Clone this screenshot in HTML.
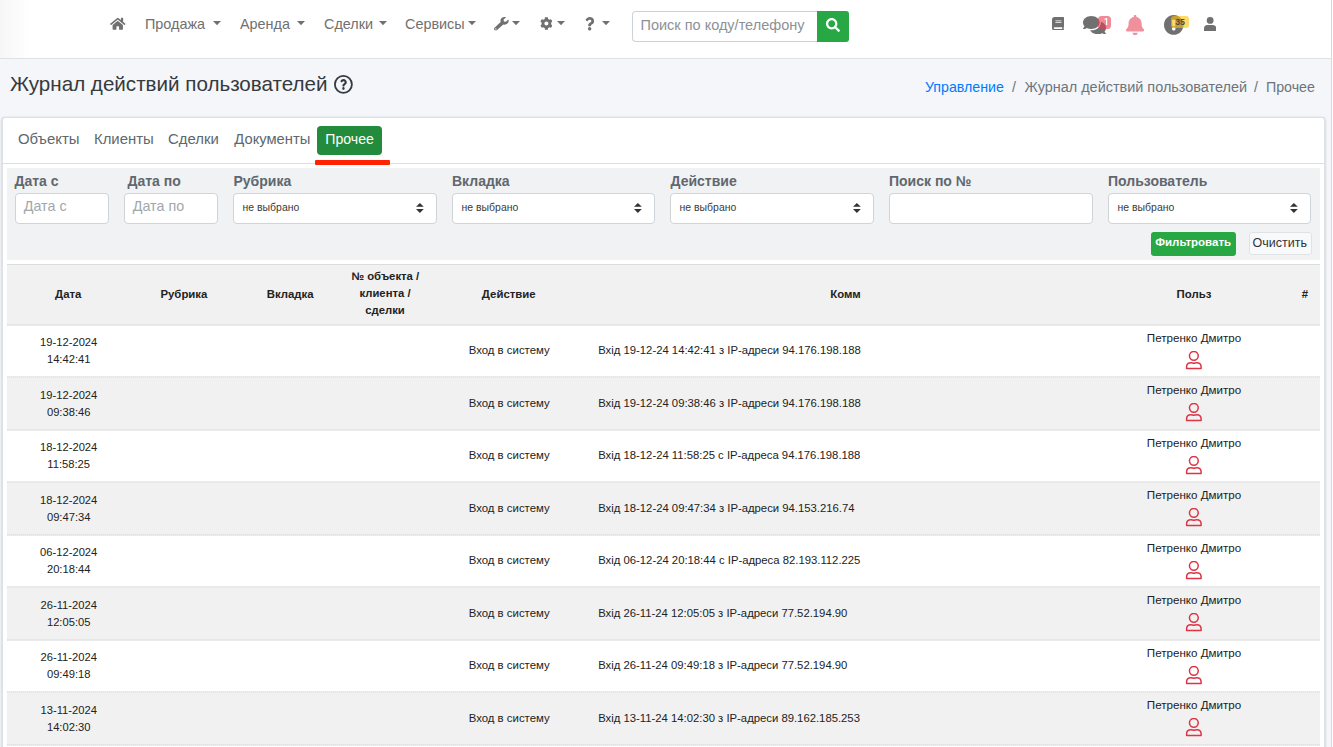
<!DOCTYPE html><html><head><meta charset="utf-8"><style>
*{box-sizing:border-box;margin:0;padding:0}
html,body{width:1333px;height:747px;overflow:hidden;background:#fff}
body{font-family:"Liberation Sans",sans-serif;position:relative;color:#212529}
.abs{position:absolute;display:block}
.t{position:absolute;white-space:nowrap;line-height:1}
#wrap{position:absolute;left:0;top:0;width:1332px;height:747px;background:#f4f6f9;border-right:1px solid #d6d8db}
#nav{position:absolute;left:0;top:0;width:1331px;height:59px;background:linear-gradient(90deg,#f6f6f6 0,#fbfbfb 16px,#fff 32px);border-bottom:1px solid #dee2e6}
#card{position:absolute;left:2px;top:117px;width:1323px;height:650px;background:#fff;border:1px solid #dfe2e5;border-radius:3px;box-shadow:0 0 1px rgba(0,0,0,.125),0 1px 3px rgba(0,0,0,.2)}
.inp{position:absolute;height:30px;background:#fff;border:1px solid #cfd4d9;border-radius:4px}
table{border-collapse:collapse;table-layout:fixed;width:1313px}
th{background:#f2f2f2;font-size:11px;font-weight:bold;color:#222;text-align:center;line-height:17px;height:60px;border-top:1px solid #dedede;border-bottom:2px dotted #e2e2e2;padding:0}
td{font-size:11px;color:#222;text-align:center;line-height:17px;height:52.5px;padding:0;border-bottom:2px dotted #e8e8e8}
tr.g td{background:#f2f2f2}
.dot{height:2px;background-image:linear-gradient(90deg,#dedede 50%,#eaeaea 50%);background-size:2px 2px;opacity:.8}
</style></head><body><div id="wrap"><div id="nav">
<svg class="abs" style="left:110px;top:17px" width="15.5" height="13.5" viewBox="0 0 576 512" preserveAspectRatio="none" fill="#707070"><path d="M280.37 148.26L96 300.11V464a16 16 0 0 0 16 16l112.06-.29a16 16 0 0 0 15.92-16V368a16 16 0 0 1 16-16h64a16 16 0 0 1 16 16v95.64a16 16 0 0 0 16 16.05L464 480a16 16 0 0 0 16-16V300L295.67 148.26a12.19 12.19 0 0 0-15.3 0zM571.6 251.47L488 182.56V44.05a12 12 0 0 0-12-12h-56a12 12 0 0 0-12 12v72.61L318.47 43a48 48 0 0 0-61 0L4.34 251.47a12 12 0 0 0-1.6 16.9l25.5 31A12 12 0 0 0 45.15 301l235.22-193.74a12.19 12.19 0 0 1 15.3 0L530.9 301a12 12 0 0 0 16.9-1.6l25.5-31a12 12 0 0 0-1.7-16.93z"/></svg>
<div class="t" style="left:145px;top:17px;font-size:14.4px;color:#707070">Продажа</div>
<svg class="abs" style="left:213.0px;top:20.8px" width="8" height="4.2" viewBox="0 0 8 4.2"><path d="M0 0 L8 0 L4 4.2 Z" fill="#707070"/></svg>
<div class="t" style="left:240px;top:17px;font-size:14.4px;color:#707070">Аренда</div>
<svg class="abs" style="left:297.2px;top:20.8px" width="8" height="4.2" viewBox="0 0 8 4.2"><path d="M0 0 L8 0 L4 4.2 Z" fill="#707070"/></svg>
<div class="t" style="left:324px;top:17px;font-size:14.4px;color:#707070">Сделки</div>
<svg class="abs" style="left:378.6px;top:20.8px" width="8" height="4.2" viewBox="0 0 8 4.2"><path d="M0 0 L8 0 L4 4.2 Z" fill="#707070"/></svg>
<div class="t" style="left:405px;top:17px;font-size:14.4px;color:#707070">Сервисы</div>
<svg class="abs" style="left:467.6px;top:20.8px" width="8" height="4.2" viewBox="0 0 8 4.2"><path d="M0 0 L8 0 L4 4.2 Z" fill="#707070"/></svg>
<svg class="abs" style="left:494.3px;top:17px" width="14.7" height="13.6" viewBox="0 0 512 512" preserveAspectRatio="none" fill="#707070"><path d="M507.73 109.1c-2.24-9.03-13.54-12.09-20.12-5.51l-74.36 74.36-67.88-11.310-11.31-67.88 74.36-74.36c6.62-6.62 3.43-17.9-5.66-20.16-47.38-11.74-99.55.91-136.58 37.930-39.64 39.64-50.55 97.1-34.05 147.2L18.74 402.76c-24.99 24.99-24.99 65.51 0 90.5 24.99 24.99 65.51 24.99 90.5 0l213.21-213.21c50.12 16.71 107.47 5.68 147.37-34.220 37.07-37.07 49.7-89.32 37.91-136.73zM64 472c-13.25 0-24-10.75-24-24 0-13.26 10.75-24 24-24s24 10.74 24 24c0 13.250-10.75 24-24 24z"/></svg>
<svg class="abs" style="left:512.1999999999999px;top:20.8px" width="8" height="4.2" viewBox="0 0 8 4.2"><path d="M0 0 L8 0 L4 4.2 Z" fill="#707070"/></svg>
<svg class="abs" style="left:539.7px;top:17px" width="12.8" height="13" viewBox="0 0 512 512" preserveAspectRatio="none" fill="#707070"><path d="M487.4 315.7l-42.6-24.6c4.3-23.2 4.3-47 0-70.2l42.6-24.6c4.9-2.8 7.1-8.6 5.5-14-11.1-35.6-30-67.8-54.7-94.6-3.8-4.1-10-5.1-14.8-2.3L380.8 110c-17.9-15.4-38.5-27.3-60.8-35.1V25.8c0-5.6-3.9-10.5-9.4-11.7-36.7-8.2-74.3-7.8-109.2 0-5.5 1.2-9.4 6.1-9.4 11.7V75c-22.2 7.9-42.8 19.8-60.8 35.1L88.7 85.5c-4.9-2.8-11-1.9-14.8 2.3-24.7 26.7-43.6 58.9-54.7 94.6-1.700 5.4.6 11.2 5.5 14L67.3 221c-4.3 23.2-4.3 47 0 70.2l-42.6 24.6c-4.9 2.8-7.1 8.6-5.5 14 11.1 35.6 30 67.8 54.7 94.6 3.8 4.1 10 5.1 14.8 2.3l42.6-24.6c17.9 15.4 38.5 27.3 60.8 35.1v49.2c0 5.6 3.9 10.5 9.4 11.7 36.7 8.2 74.3 7.8 109.2 0 5.5-1.2 9.4-6.1 9.4-11.7v-49.2c22.2-7.9 42.8-19.8 60.8-35.1l42.6 24.6c4.9 2.8 11 1.9 14.8-2.3 24.7-26.7 43.6-58.9 54.7-94.6 1.5-5.5-.7-11.3-5.6-14.1zM256 336c-44.1 0-80-35.900-80-80s35.9-80 80-80 80 35.9 80 80-35.9 80-80 80z"/></svg>
<svg class="abs" style="left:557.4px;top:20.8px" width="8" height="4.2" viewBox="0 0 8 4.2"><path d="M0 0 L8 0 L4 4.2 Z" fill="#707070"/></svg>
<svg class="abs" style="left:584.6px;top:17px" width="9.3" height="13.6" viewBox="0 0 384 512" preserveAspectRatio="none" fill="#707070"><path d="M202.021 0C122.202 0 70.503 32.703 29.914 91.026c-7.363 10.58-5.093 25.086 5.178 32.874l43.138 32.709c10.373 7.865 25.132 6.026 33.253-4.148 25.049-31.381 43.63-49.449 82.757-49.449 30.764 0 68.816 19.799 68.816 49.631 0 22.552-18.617 34.134-48.993 51.164-35.423 19.86-82.299 44.576-82.299 106.405V320c0 13.255 10.745 24 24 24h72.471c13.255 0 24-10.745 24-24v-5.773c0-42.86 125.268-44.645 125.268-160.627C377.504 66.256 286.902 0 202.021 0zM192 373.459c-38.196 0-69.271 31.075-69.271 69.271 0 38.195 31.075 69.27 69.271 69.270s69.271-31.075 69.271-69.271-31.075-69.27-69.271-69.27z"/></svg>
<svg class="abs" style="left:602.1999999999999px;top:20.8px" width="8" height="4.2" viewBox="0 0 8 4.2"><path d="M0 0 L8 0 L4 4.2 Z" fill="#707070"/></svg>
<div class="abs" style="left:632px;top:11px;width:186px;height:31px;border:1px solid #cdd2d7;border-right:none;border-radius:4px 0 0 4px;background:#fff"></div>
<div class="t" style="left:640.5px;top:18px;font-size:14.5px;color:#8c9196">Поиск по коду/телефону</div>
<div class="abs" style="left:817px;top:11px;width:32px;height:31px;background:#28a745;border-radius:0 3px 3px 0"></div>
<svg class="abs" style="left:825.6px;top:17.7px" width="14" height="14" viewBox="0 0 512 512" preserveAspectRatio="none" fill="#fff"><path d="M505 442.7L405.3 343c-4.5-4.5-10.6-7-17-7H372c27.6-35.3 44-79.7 44-128C416 93.1 322.9 0 208 0S0 93.1 0 208s93.1 208 208 208c48.3 0 92.7-16.4 128-44v16.3c0 6.4 2.5 12.5 7 17l99.7 99.7c9.4 9.4 24.6 9.4 33.9 0l28.3-28.3c9.4-9.4 9.4-24.6.1-34zM208 336c-70.7 0-128-57.2-128-128 0-70.7 57.2-128 128-128 70.7 0 128 57.2 128 128 0 70.7-57.2 128-128 128z"/></svg>
<svg class="abs" style="left:1051.7px;top:16.7px" width="12" height="13.8" viewBox="0 0 448 512" preserveAspectRatio="none" fill="#707070"><path d="M448 360V24c0-13.3-10.7-24-24-24H96C43 0 0 43 0 96v320c0 53 43 96 96 96h328c13.3 0 24-10.7 24-24v-16c0-7.5-3.5-14.3-8.9-18.7-4.2-15.4-4.2-59.3 0-74.7 5.4-4.3 8.9-11.1 8.9-18.6zM128 134c0-3.3 2.7-6 6-6h212c3.3 0 6 2.7 6 6v20c0 3.3-2.7 6-6 6H134c-3.3 0-6-2.7-6-6v-20zm0 64c0-3.3 2.7-6 6-6h212c3.3 0 6 2.7 6 6v20c0 3.3-2.7 6-6 6H134c-3.3 0-6-2.7-6-6v-20zm253.4 250H96c-17.7 0-32-14.3-32-32 0-17.6 14.4-32 32-32h285.4c-1.9 17.1-1.9 46.9 0 64z"/></svg>
<svg class="abs" style="left:1082.9px;top:15.8px" width="23.1" height="18.2" viewBox="0 32 576 448" preserveAspectRatio="none" fill="#707070"><path d="M416 192c0-88.4-93.1-160-208-160S0 103.6 0 192c0 34.3 14.1 65.9 38 92-13.4 30.2-35.5 54.2-35.8 54.5-2.2 2.3-2.8 5.7-1.5 8.7S4.8 352 8 352c36.6 0 66.9-12.3 88.7-25 32.2 15.7 70.3 25 111.3 25 114.9 0 208-71.6 208-160zm122 220c23.9-26 38-57.7 38-92 0-66.9-53.5-124.2-129.3-148.1.9 6.6 1.3 13.3 1.3 20.1 0 105.9-107.7 192-240 192-10.8 0-21.3-.8-31.7-1.9C207.8 439.6 281.8 480 368 480c41 0 79.1-9.2 111.3-25 21.8 12.7 52.1 25 88.7 25 3.2 0 6.1-1.9 7.3-4.8 1.3-2.9.7-6.3-1.5-8.7-.3-.3-22.4-24.2-35.8-54.5z"/></svg>
<div class="abs" style="left:1098.3px;top:16px;width:12.7px;height:12.7px;background:rgba(230,60,80,0.6);border-radius:3.5px"></div>
<svg class="abs" style="left:1103.5px;top:18px" width="4" height="7" viewBox="0 0 4 7"><path d="M0.6 1.6 L2.6 0.3 L2.6 7" fill="none" stroke="#fff" stroke-width="1.2"/></svg>
<svg class="abs" style="left:1125.7px;top:14.9px" width="18.2" height="20.2" viewBox="0 0 448 512" preserveAspectRatio="none" fill="#f0909c"><path d="M224 512c35.32 0 63.97-28.65 63.97-64H160.03c0 35.35 28.65 64 63.97 64zm215.39-149.71c-19.32-20.76-55.470-51.99-55.47-154.29 0-77.7-54.48-139.9-127.94-155.16V32c0-17.67-14.32-32-31.98-32s-31.98 14.33-31.98 32v20.84C118.56 68.1 64.08 130.3 64.08 208c0 102.3-36.15 133.53-55.47 154.29-6 6.45-8.66 14.16-8.61 21.71.11 16.4 12.98 32 32.1 32h383.8c19.12 0 32-15.6 32.1-32 .05-7.55-2.61-15.27-8.61-21.71z"/></svg>
<svg class="abs" style="left:1164px;top:14.9px" width="19.5" height="19.8" viewBox="8 8 496 496" preserveAspectRatio="none" fill="#707070"><path d="M504 256c0 136.997-111.043 248-248 248S8 392.997 8 256C8 119.083 119.043 8 256 8s248 111.083 248 248zm-248 50c-25.405 0-46 20.595-46 46s20.595 46 46 46 46-20.595 46-46-20.595-46-46-46zm-43.673-165.346l7.418 136c.347 6.364 5.609 11.346 11.982 11.346h48.546c6.373 0 11.635-4.982 11.982-11.346l7.418-136c.375-6.874-5.098-12.654-11.982-12.654h-63.383c-6.884 0-12.356 5.78-11.981 12.654z"/></svg>
<div class="abs" style="left:1171px;top:15.7px;width:17.8px;height:12.8px;background:rgba(255,193,7,0.6);border-radius:3px"></div>
<div class="t" style="left:1175.2px;top:17.6px;font-size:8.8px;color:#4a4a4a;font-weight:bold;letter-spacing:-0.2px">35</div>
<svg class="abs" style="left:1203.7px;top:16.5px" width="12.3" height="14.1" viewBox="0 0 12.3 14.1" fill="#707070"><circle cx="6.15" cy="3.4" r="3.4"/><path d="M0 14.1 L0 11.6 Q0 7.9 3.6 7.9 L8.7 7.9 Q12.3 7.9 12.3 11.6 L12.3 14.1 Z"/></svg>
</div>
<div class="t" style="left:10px;top:74px;font-size:20.6px;color:#343a40">Журнал действий пользователей</div>
<svg class="abs" style="left:333.9px;top:75px" width="18.8" height="18.8" viewBox="0 0 18.8 18.8"><circle cx="9.4" cy="9.4" r="8.5" fill="none" stroke="#343a40" stroke-width="1.8"/></svg>
<svg class="abs" style="left:339.9px;top:79px" width="6.9" height="11" viewBox="0 0 384 512" preserveAspectRatio="none" fill="#343a40"><path d="M202.021 0C122.202 0 70.503 32.703 29.914 91.026c-7.363 10.58-5.093 25.086 5.178 32.874l43.138 32.709c10.373 7.865 25.132 6.026 33.253-4.148 25.049-31.381 43.63-49.449 82.757-49.449 30.764 0 68.816 19.799 68.816 49.631 0 22.552-18.617 34.134-48.993 51.164-35.423 19.86-82.299 44.576-82.299 106.405V320c0 13.255 10.745 24 24 24h72.471c13.255 0 24-10.745 24-24v-5.773c0-42.86 125.268-44.645 125.268-160.627C377.504 66.256 286.902 0 202.021 0zM192 373.459c-38.196 0-69.271 31.075-69.271 69.271 0 38.195 31.075 69.27 69.271 69.270s69.271-31.075 69.271-69.271-31.075-69.27-69.271-69.27z"/></svg>
<div class="t" style="left:925px;top:80px;font-size:14.2px;color:#007bff">Управление</div>
<div class="t" style="left:1012px;top:80px;font-size:14.2px;color:#6c757d">/</div>
<div class="t" style="left:1024.5px;top:80px;font-size:14.45px;color:#6c757d">Журнал действий пользователей</div>
<div class="t" style="left:1254px;top:80px;font-size:14.2px;color:#6c757d">/</div>
<div class="t" style="left:1266px;top:80px;font-size:14.2px;color:#6c757d">Прочее</div>
<div id="card">
<div class="abs" style="left:-1px;top:45px;width:1322px;height:1px;background:#dcdfe2"></div>
<div class="t" style="left:15px;top:14px;font-size:14.9px;color:#60676e">Объекты</div>
<div class="t" style="left:91px;top:14px;font-size:14.9px;color:#60676e">Клиенты</div>
<div class="t" style="left:165px;top:14px;font-size:14.9px;color:#60676e">Сделки</div>
<div class="t" style="left:231.3px;top:14px;font-size:14.75px;color:#60676e">Документы</div>
<div class="abs" style="left:314px;top:8px;width:65px;height:29px;background:#238c3c;border-radius:4px"></div>
<div class="t" style="left:322.3px;top:14.4px;font-size:14.1px;color:#fff">Прочее</div>
<div class="abs" style="left:311.5px;top:42.3px;width:75px;height:5px;background:#ff2300;border-radius:1px"></div>
<div class="abs" style="left:4px;top:50px;width:1313px;height:91.6px;background:#f1f2f4"></div>
<div class="t" style="left:11.5px;top:56.3px;font-size:14px;color:#60676e;font-weight:bold">Дата с</div>
<div class="t" style="left:124.5px;top:56.3px;font-size:14px;color:#60676e;font-weight:bold">Дата по</div>
<div class="t" style="left:230.5px;top:56.3px;font-size:14px;color:#60676e;font-weight:bold">Рубрика</div>
<div class="t" style="left:449px;top:56.3px;font-size:14px;color:#60676e;font-weight:bold">Вкладка</div>
<div class="t" style="left:667.5px;top:56.3px;font-size:14px;color:#60676e;font-weight:bold">Действие</div>
<div class="t" style="left:886px;top:56.3px;font-size:14px;color:#60676e;font-weight:bold">Поиск по №</div>
<div class="t" style="left:1105px;top:56.3px;font-size:14px;color:#60676e;font-weight:bold">Пользователь</div>
<div class="inp" style="left:12px;top:75px;width:94px;height:31px"></div>
<div class="t" style="left:20.8px;top:81.3px;font-size:14.3px;color:#a2a7ac">Дата с</div>
<div class="inp" style="left:121px;top:75px;width:94px;height:31px"></div>
<div class="t" style="left:129.8px;top:81.3px;font-size:14.3px;color:#a2a7ac">Дата по</div>
<div class="inp" style="left:230px;top:75px;width:204px;height:31px"></div>
<div class="t" style="left:239.6px;top:84.5px;font-size:10.45px;color:#3a3a3a">не выбрано</div>
<svg class="abs" style="left:413px;top:84.8px" width="7.8" height="9.9" viewBox="0 0 7.8 9.9" preserveAspectRatio="none" fill="#333"><path d="M0 3.7 L3.9 0 L7.8 3.7 Z M0 5.9 L3.9 9.9 L7.8 5.9 Z"/></svg>
<div class="inp" style="left:449px;top:75px;width:203px;height:31px"></div>
<div class="t" style="left:458.6px;top:84.5px;font-size:10.45px;color:#3a3a3a">не выбрано</div>
<svg class="abs" style="left:631px;top:84.8px" width="7.8" height="9.9" viewBox="0 0 7.8 9.9" preserveAspectRatio="none" fill="#333"><path d="M0 3.7 L3.9 0 L7.8 3.7 Z M0 5.9 L3.9 9.9 L7.8 5.9 Z"/></svg>
<div class="inp" style="left:667px;top:75px;width:204px;height:31px"></div>
<div class="t" style="left:676.6px;top:84.5px;font-size:10.45px;color:#3a3a3a">не выбрано</div>
<svg class="abs" style="left:850px;top:84.8px" width="7.8" height="9.9" viewBox="0 0 7.8 9.9" preserveAspectRatio="none" fill="#333"><path d="M0 3.7 L3.9 0 L7.8 3.7 Z M0 5.9 L3.9 9.9 L7.8 5.9 Z"/></svg>
<div class="inp" style="left:886px;top:75px;width:204px;height:31px"></div>
<div class="inp" style="left:1105px;top:75px;width:203px;height:31px"></div>
<div class="t" style="left:1114.6px;top:84.5px;font-size:10.45px;color:#3a3a3a">не выбрано</div>
<svg class="abs" style="left:1287px;top:84.8px" width="7.8" height="9.9" viewBox="0 0 7.8 9.9" preserveAspectRatio="none" fill="#333"><path d="M0 3.7 L3.9 0 L7.8 3.7 Z M0 5.9 L3.9 9.9 L7.8 5.9 Z"/></svg>
<div class="abs" style="left:1148.1px;top:114.1px;width:84.7px;height:23.6px;background:#28a745;border-radius:3px"></div>
<div class="t" style="left:1152.2px;top:119.2px;font-size:11.5px;color:#fff;font-weight:bold">Фильтровать</div>
<div class="abs" style="left:1245.5px;top:114.4px;width:63px;height:23px;background:#f8f9fa;border:1px solid #e0e2e5;border-radius:3px"></div>
<div class="t" style="left:1249.5px;top:118.5px;font-size:12.5px;color:#333">Очистить</div>
<div class="abs" style="left:4px;top:146px;width:1313px;height:1px;background:#dcdcdc"></div>
<div class="abs" style="left:4px;top:147px;width:1313px;height:60px;background:#f1f1f1"></div>
<div class="t" style="left:-134.8px;top:170.55px;width:400px;text-align:center;font-size:11.4px;color:#222;font-weight:bold">Дата</div>
<div class="t" style="left:-19.1px;top:170.55px;width:400px;text-align:center;font-size:11.4px;color:#222;font-weight:bold">Рубрика</div>
<div class="t" style="left:87.2px;top:170.55px;width:400px;text-align:center;font-size:11.4px;color:#222;font-weight:bold">Вкладка</div>
<div class="t" style="left:182.3px;top:153.33px;width:400px;text-align:center;font-size:11.3px;color:#222;font-weight:bold">№ объекта /</div>
<div class="t" style="left:182.0px;top:170.03px;width:400px;text-align:center;font-size:11.3px;color:#222;font-weight:bold">клиента /</div>
<div class="t" style="left:182.0px;top:186.83px;width:400px;text-align:center;font-size:11.3px;color:#222;font-weight:bold">сделки</div>
<div class="t" style="left:305.8px;top:170.55px;width:400px;text-align:center;font-size:11.4px;color:#222;font-weight:bold">Действие</div>
<div class="t" style="left:642.5px;top:170.55px;width:400px;text-align:center;font-size:11.4px;color:#222;font-weight:bold">Комм</div>
<div class="t" style="left:991.0px;top:170.55px;width:400px;text-align:center;font-size:11.4px;color:#222;font-weight:bold">Польз</div>
<div class="t" style="left:1282.0px;top:170.55px;width:40px;text-align:center;font-size:11.4px;color:#222;font-weight:bold">#</div>
<div class="t" style="left:-134.3px;top:219.02px;width:400px;text-align:center;font-size:11.2px;color:#222">19-12-2024</div>
<div class="t" style="left:-134.3px;top:236.02px;width:400px;text-align:center;font-size:11.2px;color:#222">14:42:41</div>
<div class="t" style="left:306.2px;top:227.15px;width:400px;text-align:center;font-size:11.4px;color:#222">Вход в систему</div>
<div class="t" style="left:595.2px;top:227.23px;font-size:11.3px;color:#222">Вхід 19-12-24 14:42:41 з IP-адреси 94.176.198.188</div>
<div class="t" style="left:991.0px;top:213.98px;width:400px;text-align:center;font-size:11.6px;color:#222">Петренко Дмитро</div>
<svg class="abs" style="left:1182px;top:232.9px" width="18" height="19" viewBox="0 0 18 19"><path d="M1.6 17.4 L1.6 15.8 Q1.6 11.7 6 11.7 Q7.6 11.7 8.85 12.2 Q10.1 11.7 11.7 11.7 Q16.1 11.7 16.1 15.8 L16.1 17.4 Z" fill="none" stroke="#dc3545" stroke-width="1.5" stroke-linejoin="round"/><circle cx="8.85" cy="4.85" r="4.4" fill="none" stroke="#dc3545" stroke-width="1.5"/></svg>
<div class="abs" style="left:4px;top:259.5px;width:1313px;height:52.5px;background:#f1f1f1"></div>
<div class="t" style="left:-134.3px;top:271.52px;width:400px;text-align:center;font-size:11.2px;color:#222">19-12-2024</div>
<div class="t" style="left:-134.3px;top:288.52px;width:400px;text-align:center;font-size:11.2px;color:#222">09:38:46</div>
<div class="t" style="left:306.2px;top:279.65px;width:400px;text-align:center;font-size:11.4px;color:#222">Вход в систему</div>
<div class="t" style="left:595.2px;top:279.73px;font-size:11.3px;color:#222">Вхід 19-12-24 09:38:46 з IP-адреси 94.176.198.188</div>
<div class="t" style="left:991.0px;top:266.48px;width:400px;text-align:center;font-size:11.6px;color:#222">Петренко Дмитро</div>
<svg class="abs" style="left:1182px;top:285.4px" width="18" height="19" viewBox="0 0 18 19"><path d="M1.6 17.4 L1.6 15.8 Q1.6 11.7 6 11.7 Q7.6 11.7 8.85 12.2 Q10.1 11.7 11.7 11.7 Q16.1 11.7 16.1 15.8 L16.1 17.4 Z" fill="none" stroke="#dc3545" stroke-width="1.5" stroke-linejoin="round"/><circle cx="8.85" cy="4.85" r="4.4" fill="none" stroke="#dc3545" stroke-width="1.5"/></svg>
<div class="t" style="left:-134.3px;top:324.02px;width:400px;text-align:center;font-size:11.2px;color:#222">18-12-2024</div>
<div class="t" style="left:-134.3px;top:341.02px;width:400px;text-align:center;font-size:11.2px;color:#222">11:58:25</div>
<div class="t" style="left:306.2px;top:332.15px;width:400px;text-align:center;font-size:11.4px;color:#222">Вход в систему</div>
<div class="t" style="left:595.2px;top:332.23px;font-size:11.3px;color:#222">Вхід 18-12-24 11:58:25 с IP-адреса 94.176.198.188</div>
<div class="t" style="left:991.0px;top:318.98px;width:400px;text-align:center;font-size:11.6px;color:#222">Петренко Дмитро</div>
<svg class="abs" style="left:1182px;top:337.9px" width="18" height="19" viewBox="0 0 18 19"><path d="M1.6 17.4 L1.6 15.8 Q1.6 11.7 6 11.7 Q7.6 11.7 8.85 12.2 Q10.1 11.7 11.7 11.7 Q16.1 11.7 16.1 15.8 L16.1 17.4 Z" fill="none" stroke="#dc3545" stroke-width="1.5" stroke-linejoin="round"/><circle cx="8.85" cy="4.85" r="4.4" fill="none" stroke="#dc3545" stroke-width="1.5"/></svg>
<div class="abs" style="left:4px;top:364.5px;width:1313px;height:52.5px;background:#f1f1f1"></div>
<div class="t" style="left:-134.3px;top:376.52px;width:400px;text-align:center;font-size:11.2px;color:#222">18-12-2024</div>
<div class="t" style="left:-134.3px;top:393.52px;width:400px;text-align:center;font-size:11.2px;color:#222">09:47:34</div>
<div class="t" style="left:306.2px;top:384.65px;width:400px;text-align:center;font-size:11.4px;color:#222">Вход в систему</div>
<div class="t" style="left:595.2px;top:384.73px;font-size:11.3px;color:#222">Вхід 18-12-24 09:47:34 з IP-адреси 94.153.216.74</div>
<div class="t" style="left:991.0px;top:371.48px;width:400px;text-align:center;font-size:11.6px;color:#222">Петренко Дмитро</div>
<svg class="abs" style="left:1182px;top:390.4px" width="18" height="19" viewBox="0 0 18 19"><path d="M1.6 17.4 L1.6 15.8 Q1.6 11.7 6 11.7 Q7.6 11.7 8.85 12.2 Q10.1 11.7 11.7 11.7 Q16.1 11.7 16.1 15.8 L16.1 17.4 Z" fill="none" stroke="#dc3545" stroke-width="1.5" stroke-linejoin="round"/><circle cx="8.85" cy="4.85" r="4.4" fill="none" stroke="#dc3545" stroke-width="1.5"/></svg>
<div class="t" style="left:-134.3px;top:429.02px;width:400px;text-align:center;font-size:11.2px;color:#222">06-12-2024</div>
<div class="t" style="left:-134.3px;top:446.02px;width:400px;text-align:center;font-size:11.2px;color:#222">20:18:44</div>
<div class="t" style="left:306.2px;top:437.15px;width:400px;text-align:center;font-size:11.4px;color:#222">Вход в систему</div>
<div class="t" style="left:595.2px;top:437.23px;font-size:11.3px;color:#222">Вхід 06-12-24 20:18:44 с IP-адреса 82.193.112.225</div>
<div class="t" style="left:991.0px;top:423.98px;width:400px;text-align:center;font-size:11.6px;color:#222">Петренко Дмитро</div>
<svg class="abs" style="left:1182px;top:442.9px" width="18" height="19" viewBox="0 0 18 19"><path d="M1.6 17.4 L1.6 15.8 Q1.6 11.7 6 11.7 Q7.6 11.7 8.85 12.2 Q10.1 11.7 11.7 11.7 Q16.1 11.7 16.1 15.8 L16.1 17.4 Z" fill="none" stroke="#dc3545" stroke-width="1.5" stroke-linejoin="round"/><circle cx="8.85" cy="4.85" r="4.4" fill="none" stroke="#dc3545" stroke-width="1.5"/></svg>
<div class="abs" style="left:4px;top:469.5px;width:1313px;height:52.5px;background:#f1f1f1"></div>
<div class="t" style="left:-134.3px;top:481.52px;width:400px;text-align:center;font-size:11.2px;color:#222">26-11-2024</div>
<div class="t" style="left:-134.3px;top:498.52px;width:400px;text-align:center;font-size:11.2px;color:#222">12:05:05</div>
<div class="t" style="left:306.2px;top:489.65px;width:400px;text-align:center;font-size:11.4px;color:#222">Вход в систему</div>
<div class="t" style="left:595.2px;top:489.73px;font-size:11.3px;color:#222">Вхід 26-11-24 12:05:05 з IP-адреси 77.52.194.90</div>
<div class="t" style="left:991.0px;top:476.48px;width:400px;text-align:center;font-size:11.6px;color:#222">Петренко Дмитро</div>
<svg class="abs" style="left:1182px;top:495.4px" width="18" height="19" viewBox="0 0 18 19"><path d="M1.6 17.4 L1.6 15.8 Q1.6 11.7 6 11.7 Q7.6 11.7 8.85 12.2 Q10.1 11.7 11.7 11.7 Q16.1 11.7 16.1 15.8 L16.1 17.4 Z" fill="none" stroke="#dc3545" stroke-width="1.5" stroke-linejoin="round"/><circle cx="8.85" cy="4.85" r="4.4" fill="none" stroke="#dc3545" stroke-width="1.5"/></svg>
<div class="t" style="left:-134.3px;top:534.02px;width:400px;text-align:center;font-size:11.2px;color:#222">26-11-2024</div>
<div class="t" style="left:-134.3px;top:551.02px;width:400px;text-align:center;font-size:11.2px;color:#222">09:49:18</div>
<div class="t" style="left:306.2px;top:542.15px;width:400px;text-align:center;font-size:11.4px;color:#222">Вход в систему</div>
<div class="t" style="left:595.2px;top:542.23px;font-size:11.3px;color:#222">Вхід 26-11-24 09:49:18 з IP-адреси 77.52.194.90</div>
<div class="t" style="left:991.0px;top:528.98px;width:400px;text-align:center;font-size:11.6px;color:#222">Петренко Дмитро</div>
<svg class="abs" style="left:1182px;top:547.9px" width="18" height="19" viewBox="0 0 18 19"><path d="M1.6 17.4 L1.6 15.8 Q1.6 11.7 6 11.7 Q7.6 11.7 8.85 12.2 Q10.1 11.7 11.7 11.7 Q16.1 11.7 16.1 15.8 L16.1 17.4 Z" fill="none" stroke="#dc3545" stroke-width="1.5" stroke-linejoin="round"/><circle cx="8.85" cy="4.85" r="4.4" fill="none" stroke="#dc3545" stroke-width="1.5"/></svg>
<div class="abs" style="left:4px;top:574.5px;width:1313px;height:52.5px;background:#f1f1f1"></div>
<div class="t" style="left:-134.3px;top:586.52px;width:400px;text-align:center;font-size:11.2px;color:#222">13-11-2024</div>
<div class="t" style="left:-134.3px;top:603.52px;width:400px;text-align:center;font-size:11.2px;color:#222">14:02:30</div>
<div class="t" style="left:306.2px;top:594.65px;width:400px;text-align:center;font-size:11.4px;color:#222">Вход в систему</div>
<div class="t" style="left:595.2px;top:594.73px;font-size:11.3px;color:#222">Вхід 13-11-24 14:02:30 з IP-адреси 89.162.185.253</div>
<div class="t" style="left:991.0px;top:581.48px;width:400px;text-align:center;font-size:11.6px;color:#222">Петренко Дмитро</div>
<svg class="abs" style="left:1182px;top:600.4px" width="18" height="19" viewBox="0 0 18 19"><path d="M1.6 17.4 L1.6 15.8 Q1.6 11.7 6 11.7 Q7.6 11.7 8.85 12.2 Q10.1 11.7 11.7 11.7 Q16.1 11.7 16.1 15.8 L16.1 17.4 Z" fill="none" stroke="#dc3545" stroke-width="1.5" stroke-linejoin="round"/><circle cx="8.85" cy="4.85" r="4.4" fill="none" stroke="#dc3545" stroke-width="1.5"/></svg>
<div class="abs dot" style="left:4px;top:205.9px;width:1313px"></div>
<div class="abs dot" style="left:4px;top:258.4px;width:1313px"></div>
<div class="abs dot" style="left:4px;top:310.9px;width:1313px"></div>
<div class="abs dot" style="left:4px;top:363.4px;width:1313px"></div>
<div class="abs dot" style="left:4px;top:415.9px;width:1313px"></div>
<div class="abs dot" style="left:4px;top:468.4px;width:1313px"></div>
<div class="abs dot" style="left:4px;top:520.9px;width:1313px"></div>
<div class="abs dot" style="left:4px;top:573.4px;width:1313px"></div>
<div class="abs dot" style="left:4px;top:625.9px;width:1313px"></div>
</div></div></body></html>
